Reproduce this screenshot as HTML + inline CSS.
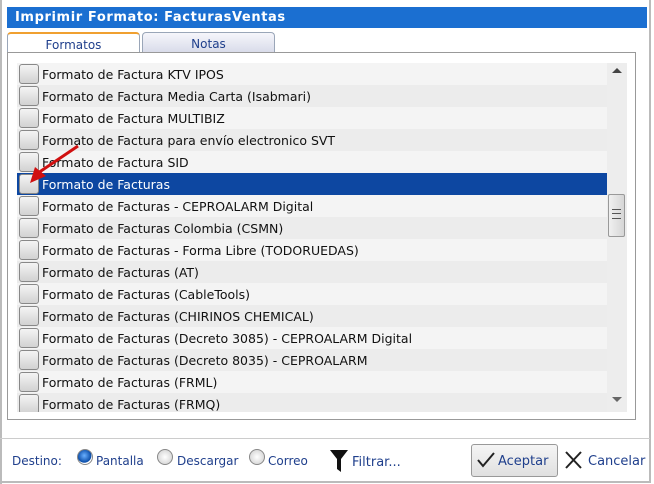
<!DOCTYPE html><html><head><style>
body{margin:0;width:654px;height:484px;background:#fff;font-family:"DejaVu Sans","Liberation Sans",sans-serif;position:relative;overflow:hidden}
.a{position:absolute}
.title{left:7px;top:7px;width:640px;height:21px;background:#1b6fd1;color:#fff;font-weight:bold;font-size:13px;line-height:21px;box-sizing:border-box;padding-left:8px;letter-spacing:0.6px}
.tab{top:32px;height:20px;font-size:12px;color:#1f3f8c;text-align:center;line-height:22px;box-sizing:border-box;border:1px solid #9aa6b8;border-bottom:none;border-radius:4px 4px 0 0}
.row{left:17px;width:590px;height:22px;font-size:12.5px;line-height:24px;color:#111}
.row .cb{position:absolute;left:2px;top:1px;width:18px;height:18px;border:1px solid #888;border-radius:3px;background:linear-gradient(#f4f4f4,#d2d2d2)}
.row span{position:absolute;left:25px}
.f{font-size:12px;color:#1f3f8c;top:454px}
.rad{top:449px;width:14px;height:14px;border-radius:50%;border:1px solid #888;background:radial-gradient(#fff,#ccc)}
</style></head><body>
<div class="a" style="left:0;top:0;width:651px;height:483px;border-right:2px solid #bbb;border-bottom:2px solid #bbb;box-sizing:border-box"></div>
<div class="a" style="left:0;top:0;width:2px;height:484px;background:#bbb"></div>
<div class="a title">Imprimir Formato: FacturasVentas</div>
<div class="a tab" style="left:7px;width:133px;background:#fff;border-top:2px solid #f0a030">Formatos</div>
<div class="a tab" style="left:142px;width:133px;background:linear-gradient(#f6f6fb,#d9dcea)">Notas</div>
<div class="a" style="left:7px;top:52px;width:629px;height:368px;border:1px solid #999;box-sizing:border-box;border-top:none"></div>
<div class="a" style="left:7px;top:52px;width:629px;height:1px;background:#999"></div>
<div class="a" style="left:17px;top:63px;width:610px;height:349px;background:#f4f4f4;overflow:hidden">
</div>
<div id="rows"></div>
<div class="a" style="left:607px;top:63px;width:20px;height:349px;background:#ededed"></div>
<div class="a" style="left:612px;top:68px;width:0;height:0;border-left:5px solid transparent;border-right:5px solid transparent;border-bottom:5px solid #444"></div>
<div class="a" style="left:612px;top:397px;width:0;height:0;border-left:5px solid transparent;border-right:5px solid transparent;border-top:5px solid #666"></div>
<div class="a" style="left:608px;top:194px;width:17px;height:43px;border:1px solid #999;border-radius:2px;box-sizing:border-box;background:linear-gradient(90deg,#f0f0f0,#d6d6d6)"></div>
<div class="a" style="left:612px;top:209px;width:9px;height:8px;border-top:1px solid #555;border-bottom:1px solid #555"></div>
<div class="a" style="left:612px;top:213px;width:9px;height:1px;background:#555"></div>
<div class="a" style="left:0;top:438px;width:650px;height:1px;background:#ccc"></div>
<div class="a f" style="left:12px">Destino:</div>
<div class="a rad" style="left:77px;background:radial-gradient(circle at 45% 40%,#6ab0ff,#0b4da8 60%,#fff 65%)"></div>
<div class="a f" style="left:96px">Pantalla</div>
<div class="a rad" style="left:157px"></div>
<div class="a f" style="left:177px">Descargar</div>
<div class="a rad" style="left:249px"></div>
<div class="a f" style="left:268px">Correo</div>
<svg class="a" style="left:330px;top:450px" width="18" height="22"><path d="M0 0H18L11 9V22L7 19V9Z" fill="#111"/></svg>
<div class="a f" style="left:352px;font-size:13px;top:455px">Filtrar...</div>
<div class="a" style="left:471px;top:444px;width:87px;height:33px;border:1px solid #999;border-radius:3px;box-sizing:border-box;background:linear-gradient(#f5f5f5,#e0e0e0)"></div>
<svg class="a" style="left:477px;top:452px" width="18" height="16"><path d="M1 8L6 14L17 1" stroke="#222" stroke-width="2" fill="none"/></svg>
<div class="a f" style="left:498px;font-size:13px;top:454px">Aceptar</div>
<svg class="a" style="left:565px;top:451px" width="17" height="18"><path d="M1 1L16 17M16 1L1 17" stroke="#222" stroke-width="2"/></svg>
<div class="a f" style="left:588px;font-size:13px;top:454px">Cancelar</div>
<svg class="a" style="left:22px;top:143px" width="60" height="45"><path d="M56 3L16 30" stroke="#d01010" stroke-width="3"/><path d="M8 40L13 24L24 33Z" fill="#d01010"/></svg>
<script>
var t=["Formato de Factura KTV IPOS","Formato de Factura Media Carta (Isabmari)","Formato de Factura MULTIBIZ","Formato de Factura para envío electronico SVT","Formato de Factura SID","Formato de Facturas","Formato de Facturas - CEPROALARM Digital","Formato de Facturas Colombia (CSMN)","Formato de Facturas - Forma Libre (TODORUEDAS)","Formato de Facturas (AT)","Formato de Facturas (CableTools)","Formato de Facturas (CHIRINOS CHEMICAL)","Formato de Facturas (Decreto 3085) - CEPROALARM Digital","Formato de Facturas (Decreto 8035) - CEPROALARM","Formato de Facturas (FRML)","Formato de Facturas (FRMQ)"];
var h="";t.forEach(function(s,i){var top=63+22*i,hh=i==15?19:22;var bg=i==5?"#0d47a1":(i%2?"#ececec":"#f4f4f4");var c=i==5?"#fff":"#111";
h+='<div class="a row" style="top:'+top+'px;height:'+hh+'px;overflow:hidden;background:'+bg+';color:'+c+'"><div class="cb"></div><span>'+s+'</span></div>';});
document.getElementById("rows").innerHTML=h;
</script>
</body></html>
